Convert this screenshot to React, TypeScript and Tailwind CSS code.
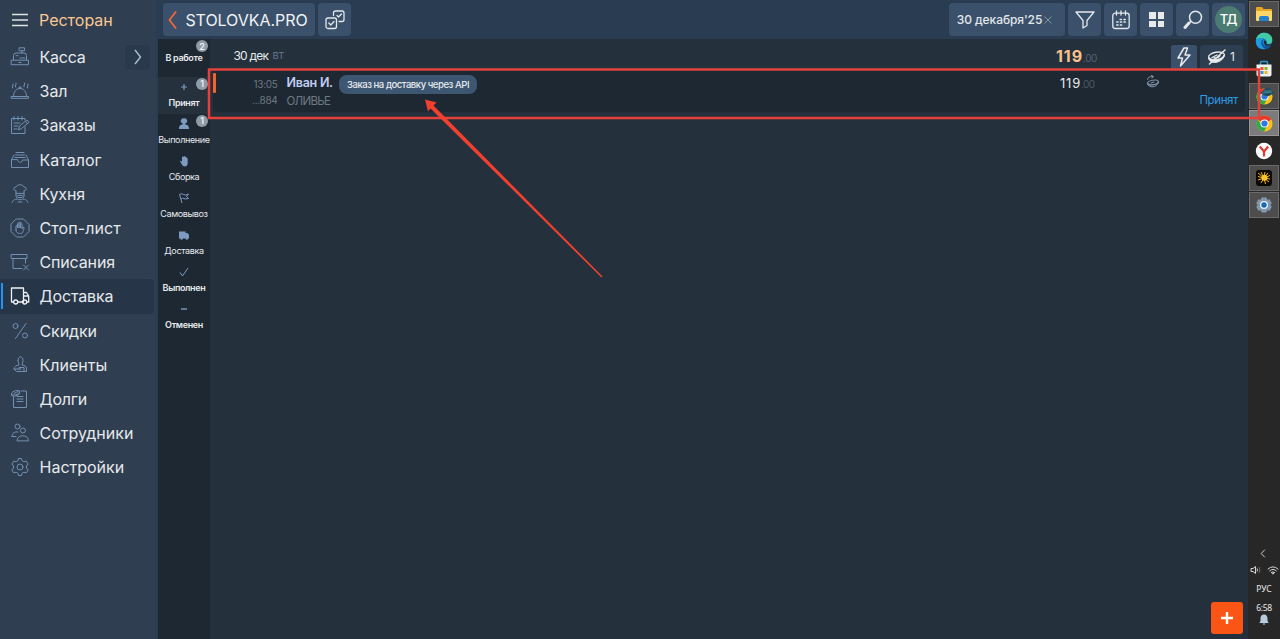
import React from "react";

type IconProps = { children: React.ReactNode; className?: string; box?: string };

function Line({ children, className = "size-5", box = "0 0 20 20" }: IconProps) {
  return (
    <svg viewBox={box} className={className} fill="none" stroke="currentColor" strokeWidth="1" strokeLinecap="round" strokeLinejoin="round">
      {children}
    </svg>
  );
}

const menu = [
  {
    label: "Касса",
    spacing: "tracking-[-0.25px]",
    icon: <path d="M9.500.8h5v3h-5zM12 3.800v2M3.500 13V8.500q0-2.500 2.500-2.500h8q2.500 0 2.500 2.500V13M1.500 13.200h17v4.500h-17zM6 8.700h2M10 11h5M9 15.500h2" />,
  },
  {
    label: "Зал",
    spacing: "tracking-[0px]",
    icon: <path d="M1.500 15.500h17v1.800h-17zM3.500 15.500c0-5 2.500-8 6.500-8s6.500 3 6.500 8M9 7.500V6h2v1.500M2.500 7c-1-2 1.500-2 .5-4M5.500 6c-1-2 1.500-2 .500-4M14 6c-1-2 1.500-2 .500-4M17.500 7c-1-2 1.500-2 .500-4" />,
  },
  {
    label: "Заказы",
    spacing: "tracking-[0px]",
    icon: <path d="M15 5V3.500H1.500v15H15V12M4 1.500V5M8 1.500V5M12 1.500V5M4 8h6M4 11h4M4 14h3M8.500 14.500l1-3.500 7.500-6 2 2.300-7.500 6.200zM15.500 6.500l1.800 2" />,
  },
  {
    label: "Каталог",
    spacing: "tracking-[0px]",
    icon: <path d="M1.500 10v7.500h17V10h-6c0 3-5 3-5 0zM1.500 10L4 5M18.500 10L16 5M5 7.500h10M5.500 5h9M6 2.500h8" />,
  },
  {
    label: "Кухня",
    spacing: "tracking-[-0.15px]",
    icon: <path d="M6 9V6.500C3 6.500 3 3 6 3c1-3 7-3 8 0 3 0 3 3.500 0 3.500V9zM6 9v3c0 5 8 5 8 0V9M7 12q3-2 6 0M8 13.500h4M2 18.500c1-3 3-3 4.500-3M18 18.500c-1-3-3-3-4.500-3M8 18h4" />,
  },
  {
    label: "Стоп-лист",
    spacing: "tracking-[0.1px]",
    icon: (
      <>
        <path d="M6.500 1h7L19 6.500v7L13.500 19h-7L1 13.500v-7z" />
        <path d="M6 12V8q1-1 1.500 0v2-4.500q1-1 1.500 0V10 4.500q1-1 1.500 0V10 5.500q1-1 1.500 0V11l1-2q1.500 0 1 1.500c-1 3-1 5-3.500 5-3 0-4.500-1-4.500-3.500z" />
      </>
    ),
  },
  {
    label: "Списания",
    spacing: "tracking-[-0.15px]",
    icon: <path d="M1.500 2.500h15.500v4H1.500zM3 6.500v10h9M15.500 6.500V11M13.500 13l5 5M18.500 13l-5 5" />,
  },
  {
    label: "Доставка",
    spacing: "tracking-[-0.15px]",
    icon: (
      <g strokeWidth="1.300">
        <path d="M3.500 16H1.500V2h12v14H8M13.500 6.500h3l2.200 3.500v6h-1.500M13.500 10h5" />
        <circle cx="5.700" cy="16" r="2" />
        <circle cx="14.700" cy="16" r="2" />
      </g>
    ),
  },
  {
    label: "Скидки",
    spacing: "tracking-[-0.1px]",
    icon: (
      <>
        <circle cx="5.500" cy="5" r="2.500" />
        <circle cx="15" cy="14.500" r="2.500" />
        <path d="M16 2.500L5.500 17.500" />
      </>
    ),
  },
  {
    label: "Клиенты",
    spacing: "tracking-[0px]",
    icon: <path d="M8 5.500c0-5 5-5 5 0 0 2-1 3-1 4.500 3 .5 4.500 1.500 4.500 3.500v3H6.500L4 14c0-2 2-3.500 5-4 0-1.500-1-2.500-1-4.500M4 14h7M9 14v-1.500h5v4" />,
  },
  {
    label: "Долги",
    spacing: "tracking-[-0.2px]",
    icon: <path d="M11 2h5.500v16.500h-13V8M1.500 4.500c1-3 7-4 8-2s-5 4.500-7.500 3.500M1.500 4.500v2c2 1.500 7 0 8-2V2M4 4.500L8 2.500M7 10h6M7 12.500h6M7 7.500h6" />,
  },
  {
    label: "Сотрудники",
    spacing: "tracking-[0px]",
    icon: (
      <>
        <circle cx="7.500" cy="3.500" r="2.500" />
        <circle cx="13" cy="7.500" r="2.500" />
        <path d="M2 13.500c0-4 3-5 6-4.500M2 13.500h4M7 17.500c0-6.500 11.500-6.500 11.500 0z" />
      </>
    ),
  },
  {
    label: "Настройки",
    spacing: "tracking-[0px]",
    icon: (
      <>
        <circle cx="10" cy="10" r="3" />
        <path d="M8.500 1.500h3l.6 2.300 1.800 1 2.300-.8 2 3-1.700 2v2l1.700 2-2 3-2.300-.8-1.800 1-.6 2.300h-3l-.6-2.300-1.800-1-2.300.8-2-3 1.700-2V9L1.800 7l2-3 2.300.8 1.800-1z" />
      </>
    ),
  },
];

const statuses = [
  { label: "Принят", count: 1, bold: true, active: true, icon: <path d="M6 3v6M3 6h6" stroke="currentColor" strokeWidth="1.200" /> },
  {
    label: "Выполнение",
    count: 1,
    icon: <path fill="currentColor" d="M6 .5a2.500 2.500 0 0 1 1.400 4.800v1.200c2 .3 3.600 1 3.600 4.500H1c0-3.500 1.600-4.200 3.600-4.500V5.300A2.500 2.500 0 0 1 6 .5z" />,
  },
  {
    label: "Сборка",
    icon: <path fill="currentColor" d="M1.500 5.500L4 6.500V2l.8-.5.7.3L6.500 1l.8.700 1 .3.500 1 .900.500V8c0 2-1 3.500-3 3.500C4.500 11.500 3.500 8.500 1.500 5.500z" />,
  },
  { label: "Самовывоз", icon: <path d="M1.500 2.500l2.500 8.500M1.500 2.500q2-1.500 4 0t5-.5L8.500 4.500l2 2q-3 1-4.500 0t-3 .8" stroke="currentColor" /> },
  {
    label: "Доставка",
    icon: <path fill="currentColor" d="M1 2.500h6.500V4h2L11 6v3.500h-1a1.200 1.200 0 0 1-2.400 0H4.800a1.200 1.200 0 0 1-2.400 0H1z" />,
  },
  { label: "Выполнен", bold: true, icon: <path d="M2 6.500L4.500 10 10 2" stroke="currentColor" /> },
  { label: "Отменен", bold: true, icon: <path d="M3 6h6" stroke="currentColor" strokeWidth="1.400" /> },
];

function Badge({ n }: { n: number }) {
  return (
    <span className="absolute right-[2px] top-[1px] flex size-[12px] items-center justify-center rounded-full bg-[#8f9ba6] text-[9px] font-semibold leading-none text-[#eef2f5]">
      {n}
    </span>
  );
}

function HeadButton({ children, className = "w-[33px]" }: { children: React.ReactNode; className?: string }) {
  return (
    <div className={`flex h-[33px] shrink-0 items-center justify-center rounded-[4px] bg-[#3b516b] text-[#e3e8ec] ${className}`}>
      {children}
    </div>
  );
}

function Plate({ className = "" }: { className?: string }) {
  return (
    <svg viewBox="0 0 20 16" className={className} fill="none" stroke="currentColor" strokeLinecap="round">
      <ellipse cx="9.500" cy="7" rx="8" ry="3.800" transform="rotate(-10 9.500 7)" strokeWidth="1.300" />
      <path d="M1.500 8.500c0 8 15 6 16-3-2.500 5.500-11 7-16 3z" fill="currentColor" />
      <path d="M5 8.500l5-2.500M13 6.500c-.5 1.500-3 2.500-6 2.500" strokeWidth="1.300" />
      <path d="M2.500 15L18 1" strokeWidth="1.500" />
    </svg>
  );
}

function Chrome() {
  return (
    <svg viewBox="0 0 18 18" className="size-[17px]">
      <circle cx="9" cy="9" r="8.500" fill="#fbc116" />
      <path d="M9 9L1.600 4.800A8.500 8.500 0 0 1 16.400 4.800z" fill="#e33b2e" />
      <path d="M9 9H5L1.600 4.800A8.500 8.500 0 0 0 8.500 17.500L12 11z" fill="#2da94f" />
      <circle cx="9" cy="9" r="4.300" fill="#fff" />
      <circle cx="9" cy="9" r="3.300" fill="#2f77e5" />
    </svg>
  );
}

const apps: { box: string; icon: React.ReactNode }[] = [
  {
    box: "bg-[#4d4d4d] border-[#6a6a6a]",
    icon: (
      <svg viewBox="0 0 18 18" className="size-[18px]">
        <path d="M1 3q0-1 1-1h5l1.500 2H16q1 0 1 1v10H1z" fill="#e8a723" />
        <path d="M1 6h16v9q0 1-1 1H2q-1 0-1-1z" fill="#ffd667" />
        <path d="M4 16v-3q0-2 2-2h6q2 0 2 2v3z" fill="#2382cf" />
      </svg>
    ),
  },
  {
    box: "border-transparent",
    icon: (
      <svg viewBox="0 0 18 18" className="size-[18px]">
        <circle cx="9" cy="9" r="8.300" fill="#1583d2" />
        <path d="M1 8C2 2 7 .5 10 .8c5 .5 7.500 4 7.300 7.500-.3 3.200-3 4.200-5.800 3.700 1-1.500.5-5-3-5.500C5 6 2 7 1 8z" fill="#43c9a4" />
        <path d="M1 8c2-2.500 6-2.500 8-1C5 7.500 5 14 10.500 17 3 18.500.5 13 1 8z" fill="#1e9ade" />
        <path d="M9 7c-3 3-1 7 3 7 2 0 3.500-.5 4.500-1.500C15 15.500 13 17 10.500 17 5 14 5 8 9 7z" fill="#11559c" />
        <path d="M9 8.500c1.500-.5 3 1.500 2.300 3 1 1 4 1.500 6.200-.5l-1 2c-2 1.500-7 1-7.500-2z" fill="#272727" />
      </svg>
    ),
  },
  {
    box: "border-transparent",
    icon: (
      <svg viewBox="0 0 18 18" className="size-[18px]">
        <path d="M5.500 5V2.500q0-1 1-1h5q1 0 1 1V5" fill="none" stroke="#2a9bd6" strokeWidth="1.500" />
        <path d="M1.500 4.500h15v10q0 2-2 2h-11q-2 0-2-2z" fill="#edf1f4" />
        <path d="M5.500 7H8.500v3h-3z" fill="#ef5327" />
        <path d="M9.500 7h3v3h-3z" fill="#7ebb1b" />
        <path d="M5.500 11h3v3h-3z" fill="#209bdd" />
        <path d="M9.500 11h3v3h-3z" fill="#f9b516" />
      </svg>
    ),
  },
  {
    box: "bg-[#4d4d4d] border-[#6a6a6a]",
    icon: (
      <span className="relative block">
        <Chrome />
        <svg viewBox="0 0 14 9" className="absolute -right-[1px] top-0 h-[9px] w-[14px]">
          <path d="M0 5l3-2 2-3h5l1 3 3 2-5 3q-4 1-9-3z" fill="#204f60" />
          <path d="M4 3h7M2 5l10-1" stroke="#418a9b" />
        </svg>
      </span>
    ),
  },
  { box: "bg-[#7b7b7b] border-[#969696]", icon: <Chrome /> },
  {
    box: "border-transparent",
    icon: (
      <svg viewBox="0 0 18 18" className="size-[18px]">
        <circle cx="9" cy="9" r="8.200" fill="#fff" />
        <path d="M4.800 4.500L9 9.500V14.500M13.200 4.500L9 9.500" fill="none" stroke="#e6392e" strokeWidth="2.200" />
      </svg>
    ),
  },
  {
    box: "bg-[#4d4d4d] border-[#6a6a6a]",
    icon: (
      <svg viewBox="0 0 18 18" className="size-[18px]">
        <rect x="1" y="1" width="16" height="16" rx="3" fill="#0c0903" />
        <path d="M9 9L3 4M9 9L6 3M9 9l1-6M9 9l4-5M9 9l6-2.500M9 9l6 1M9 9l5 4M9 9l1.500 6M9 9l-3 5M9 9l-6 2M9 9L3 7.500" stroke="#f2b51c" strokeWidth="1" />
        <circle cx="9.500" cy="8.700" r="3" fill="#fac52c" />
      </svg>
    ),
  },
  {
    box: "bg-[#4d4d4d] border-[#6a6a6a]",
    icon: (
      <svg viewBox="0 0 18 18" className="size-[18px]">
        <path d="M6.500 1.500h5l.7 2.200 2.300-.4 2.300 4L15.300 9l1.500 1.700-2.300 4-2.300-.4-.7 2.200h-5l-.7-2.200-2.300.4-2.300-4L2.700 9 1.200 7.300l2.300-4 2.300.4z" fill="#8398ad" />
        <circle cx="9" cy="9" r="4" fill="#eaf1f7" />
        <circle cx="9" cy="9" r="2.700" fill="#176bb3" />
      </svg>
    ),
  },
];

export default function App() {
  return (
    <div className="relative flex h-[639px] w-[1280px] overflow-hidden bg-[#24303c] font-['Inter','Noto_Sans',sans-serif] text-[#e6eaed]">
      <aside className="flex w-[158px] shrink-0 flex-col border-r-2 border-[#2b3c52] bg-[#2f3e50]">
        <div className="flex h-10 items-center pl-3">
          <svg viewBox="0 0 16 14" className="h-[14px] w-4 text-[#dde2e5]" stroke="currentColor" strokeWidth="1.300">
            <path d="M0 1.500h16M0 7h16M0 12.500h16" />
          </svg>
          <span className="ml-[11px] text-[16px] leading-none text-[#fcc893]">Ресторан</span>
        </div>
        {menu.map((item, i) => (
          <div
            key={item.label}
            className={`relative flex h-[34.2px] w-[154px] shrink-0 items-center rounded-r-[4px] pl-[10px] ${i === 7 ? "bg-[#263547] text-[#eef1f3]" : "text-[#7390b2]"}`}
          >
            {i === 7 && <span className="absolute left-[1px] top-[4px] h-[26px] w-[2px] bg-[#2196f3]" />}
            <Line>{item.icon}</Line>
            <span className={`ml-[9.500px] text-[16px] leading-none text-[#e6e9ec] ${item.spacing}`}>{item.label}</span>
            {i === 0 && (
              <span className="ml-auto mr-[4px] flex size-[25px] items-center justify-center rounded-[4px] bg-[#2a394c] text-[#a5bad2]">
                <svg viewBox="0 0 8 16" className="h-4 w-2" fill="none" stroke="currentColor" strokeWidth="1.500">
                  <path d="M1 1l5.500 7L1 15" />
                </svg>
              </span>
            )}
          </div>
        ))}
      </aside>

      <div className="flex w-[1090px] shrink-0 flex-col">
        <header className="flex h-[39px] shrink-0 items-center gap-[3px] bg-[#293c52] pl-[5px] pr-[3px]">
          <HeadButton className="w-[152px] gap-[8px] pr-[2px]">
            <svg viewBox="0 0 9 18" className="h-[18px] w-[9px] shrink-0" fill="none" stroke="#f4673b" strokeWidth="1.700">
              <path d="M8 .5L1.500 9 8 17.500" />
            </svg>
            <span className="text-[16px] leading-none tracking-[-0.05px] text-[#f0f3f5]">STOLOVKA.PRO</span>
          </HeadButton>
          <HeadButton>
            <Line className="size-5">
              <g strokeWidth="1.300">
                <rect x="1" y="8" width="10.500" height="10.500" rx="2" />
                <path d="M8.500 5.500V3q0-2 2-2H17q2 0 2 2v6.500q0 2-2 2h-3M3.800 13l2 2L9 11.500M12 5.500l1.500 1.500L16.500 4" />
              </g>
            </Line>
          </HeadButton>
          <div className="flex-1" />
          <HeadButton className="w-[116px] gap-[2px] pr-[5px]">
            <span className="text-[12px] font-medium leading-none tracking-[-0.08px]">30 декабря'25</span>
            <svg viewBox="0 0 8 8" className="size-2" stroke="#8292a3">
              <path d="M.5.5l7 7M7.500.5l-7 7" />
            </svg>
          </HeadButton>
          <HeadButton>
            <Line className="size-5">
              <path d="M1 2h18l-7 8.500v5L8 18v-7.500z" strokeWidth="1.300" />
            </Line>
          </HeadButton>
          <HeadButton>
            <Line className="size-5">
              <g strokeWidth="1.300">
                <rect x="1.800" y="3.200" width="16.400" height="15.300" rx="2.500" />
                <path d="M5.500 1v4M10 1v4M14.500 1v4" />
                <path d="M9.200 9.500h1.200M13 9.500h1.200M5.800 12h1.200M9.400 12h1.200M13 12h1.200M5.800 15h1.200M9.400 15h1.200" strokeWidth="1.600" />
              </g>
            </Line>
          </HeadButton>
          <HeadButton>
            <div className="grid grid-cols-2 gap-[2px]">
              {[0, 1, 2, 3].map((n) => (
                <span key={n} className="size-[6.500px] bg-[#e9e9ea]" />
              ))}
            </div>
          </HeadButton>
          <HeadButton>
            <Line className="size-5">
              <circle cx="12.500" cy="7.300" r="6" strokeWidth="1.500" />
              <path d="M7.500 11.500l-.8 1" strokeWidth="1.500" />
              <path d="M6 13l-4 4.500" strokeWidth="3" />
            </Line>
          </HeadButton>
          <HeadButton>
            <span className="flex size-[27px] items-center justify-center rounded-full bg-[#4c7b72] text-[13px] font-medium leading-none text-white">ТД</span>
          </HeadButton>
        </header>

        <div className="flex min-h-0 flex-1">
          <nav className="flex w-[52px] shrink-0 flex-col bg-[#1e2833] text-[9px] leading-none tracking-[-0.35px]">
            <div className="relative flex h-[37.500px] justify-center pt-[14px]">
              <Badge n={2} />
              <span className="font-semibold">В работе</span>
            </div>
            {statuses.map((s) => (
              <div key={s.label} className={`relative flex h-[37.150px] flex-col items-center pt-[4px] ${s.active ? "bg-[#25313d]" : ""}`}>
                {s.count && <Badge n={s.count} />}
                <svg viewBox="0 0 12 12" className="size-3 shrink-0 text-[#7d9bc0]" fill="none" strokeLinejoin="round">
                  {s.icon}
                </svg>
                <span className={`mt-[5px] whitespace-nowrap ${s.bold ? "font-semibold" : ""}`}>{s.label}</span>
              </div>
            ))}
          </nav>

          <main className="relative flex min-w-0 flex-1 flex-col">
            <div className="flex h-[31px] shrink-0 items-center whitespace-nowrap pl-[23.500px] pr-[5px] pt-[2px]">
              <span className="w-[39px] text-[12px] leading-none tracking-[-0.8px]">30 дек</span>
              <span className="text-[11px] leading-none text-[#627488]">вт</span>
              <span className="ml-auto mr-[74px] flex items-baseline leading-none">
                <span className="text-[16px] font-bold tracking-[0.9px] text-[#fac38b]">119</span>
                <span className="text-[10px] tracking-[-0.4px] text-[#566371]">.00</span>
              </span>
              <span className="mt-[3px] flex h-[25px] w-[26px] items-center justify-center rounded-t-[3px] bg-[#3b516b]">
                <Line className="size-5">
                  <path d="M10 1L4 11h4.500L6.500 19l9.500-11h-5L13.500 1z" strokeWidth="1.500" />
                </Line>
              </span>
              <span className="ml-[3px] mt-[3px] flex h-[25px] w-[43px] items-center justify-center gap-[3px] rounded-t-[3px] bg-[#2d3e50] pr-px text-[12px] leading-none">
                <Plate className="h-4 w-5" />1
              </span>
            </div>

            <div className="ml-[3px] mr-[3px] flex h-[42px] shrink-0 rounded-[4px] bg-[#1e2832]">
              <span className="mt-[3px] h-[20px] w-[3px] rounded-[1px] bg-[#f1632c]" />
              <div className="flex w-[61.500px] flex-col items-end pt-[9px] text-[10px] leading-none tracking-[-0.3px] text-[#6d7882]">
                <span>13:05</span>
                <span className="mt-[6px]">...884</span>
              </div>
              <div className="ml-[9px] flex w-[773.500px] flex-col">
                <div className="flex h-[26px] items-center">
                  <span className="mt-[1px] w-[52.500px] whitespace-nowrap text-[12.500px] font-semibold leading-none tracking-[-0.25px] text-[#c0cdf5]">Иван И.</span>
                  <span className="mt-[3px] flex h-[19px] w-[138px] items-center justify-center whitespace-nowrap rounded-[8px] bg-[#3d5672] text-[9.500px] font-medium leading-none tracking-[-0.45px]">
                    Заказ на доставку через API
                  </span>
                </div>
                <span className="text-[11.500px] leading-none tracking-[-0.7px] text-[#6d7882]">ОЛИВЬЕ</span>
              </div>
              <span className="flex w-[86px] items-baseline pt-[7px] leading-none">
                <span className="text-[13px] tracking-[0.8px]">119</span>
                <span className="text-[10px] tracking-[-0.6px] text-[#4d5965]">.00</span>
              </span>
              <svg viewBox="0 0 14 14" className="mt-[5px] size-[14px] text-[#8194a8]" fill="none" stroke="currentColor" strokeLinecap="round">
                <path d="M1.500 4.500c0-2 2-3 5-3M5.500.5l2 1L6 3.200" />
                <ellipse cx="7" cy="7.500" rx="5.500" ry="2.300" transform="rotate(-10 7 7.500)" />
                <path d="M1.500 8.500c0 5 10.500 4.500 11-2-2 3.500-7.500 4.500-11 2zM5 8l3-1" />
              </svg>
              <span className="ml-auto mr-[7px] pt-[25px] text-[11.500px] leading-none tracking-[-0.4px] text-[#2d9be6]">Принят</span>
            </div>

            <button className="absolute bottom-[5px] right-[5px] flex size-[32px] items-center justify-center rounded-[3px] bg-[#fa5514]">
              <svg viewBox="0 0 12 12" className="size-3" stroke="#fff" strokeWidth="2.400">
                <path d="M6 0v12M0 6h12" />
              </svg>
            </button>
          </main>
        </div>
      </div>

      <div className="flex w-8 shrink-0 flex-col items-center bg-[#272727] pb-[14px] pt-[1px]">
        {apps.map((a, i) => (
          <div key={i} className={`mb-[1px] flex h-[26.300px] w-[30px] shrink-0 items-center justify-center border ${a.box}`}>
            {a.icon}
          </div>
        ))}
        <div className="flex-1" />
        <svg viewBox="0 0 6 10" className="mr-[2px] h-[9px] w-[6px]" fill="none" stroke="#e2e2e2">
          <path d="M5 .8L1 5l4 4.200" />
        </svg>
        <div className="mt-[7px] flex gap-[5px]">
          <svg viewBox="0 0 12 10" className="h-[10px] w-3" fill="none" stroke="#d6d6d6">
            <path d="M1 3.500h2L5.500 1.500v7L3 6.500H1zM7 3.500q1 1.500 0 3" />
            <path d="M9 2q2 3 0 6" stroke="#6c6c6c" />
          </svg>
          <svg viewBox="0 0 12 10" className="h-[10px] w-3" fill="none" stroke="#d6d6d6" strokeLinecap="round">
            <path d="M1 4q5-4.500 10 0M2.700 5.800q3.300-3 6.600 0M4.300 7.500q1.700-1.500 3.400 0" />
            <circle cx="6" cy="8.500" r=".6" />
          </svg>
        </div>
        <span className="mt-[10px] font-['Noto_Sans',sans-serif] text-[8.500px] leading-none text-[#ebebeb]">РУС</span>
        <span className="mt-[10px] font-['Noto_Sans',sans-serif] text-[8.500px] leading-none tracking-[-0.3px] text-[#ebebeb]">6:58</span>
        <svg viewBox="0 0 10 11" className="mt-[2px] h-[11px] w-[10px]" fill="#b8cbdb">
          <path d="M5 .5c2.500 0 3.500 1.700 3.500 4v2.500l1.200 2H.3l1.200-2V4.500c0-2.300 1-4 3.500-4zM3.500 9.500h3L5 11z" />
        </svg>
      </div>

      <svg viewBox="0 0 1280 639" className="pointer-events-none absolute inset-0 h-[639px] w-[1280px]">
        <rect x="209" y="69.500" width="1050" height="48.500" fill="none" stroke="#e5413a" strokeWidth="2.500" />
        <path d="M425 99.500L436.500 102.500L433.500 105.500L602.500 276.500L601.500 277.500L430.500 108.500L428 111.500z" fill="#f2402f" />
      </svg>
    </div>
  );
}
